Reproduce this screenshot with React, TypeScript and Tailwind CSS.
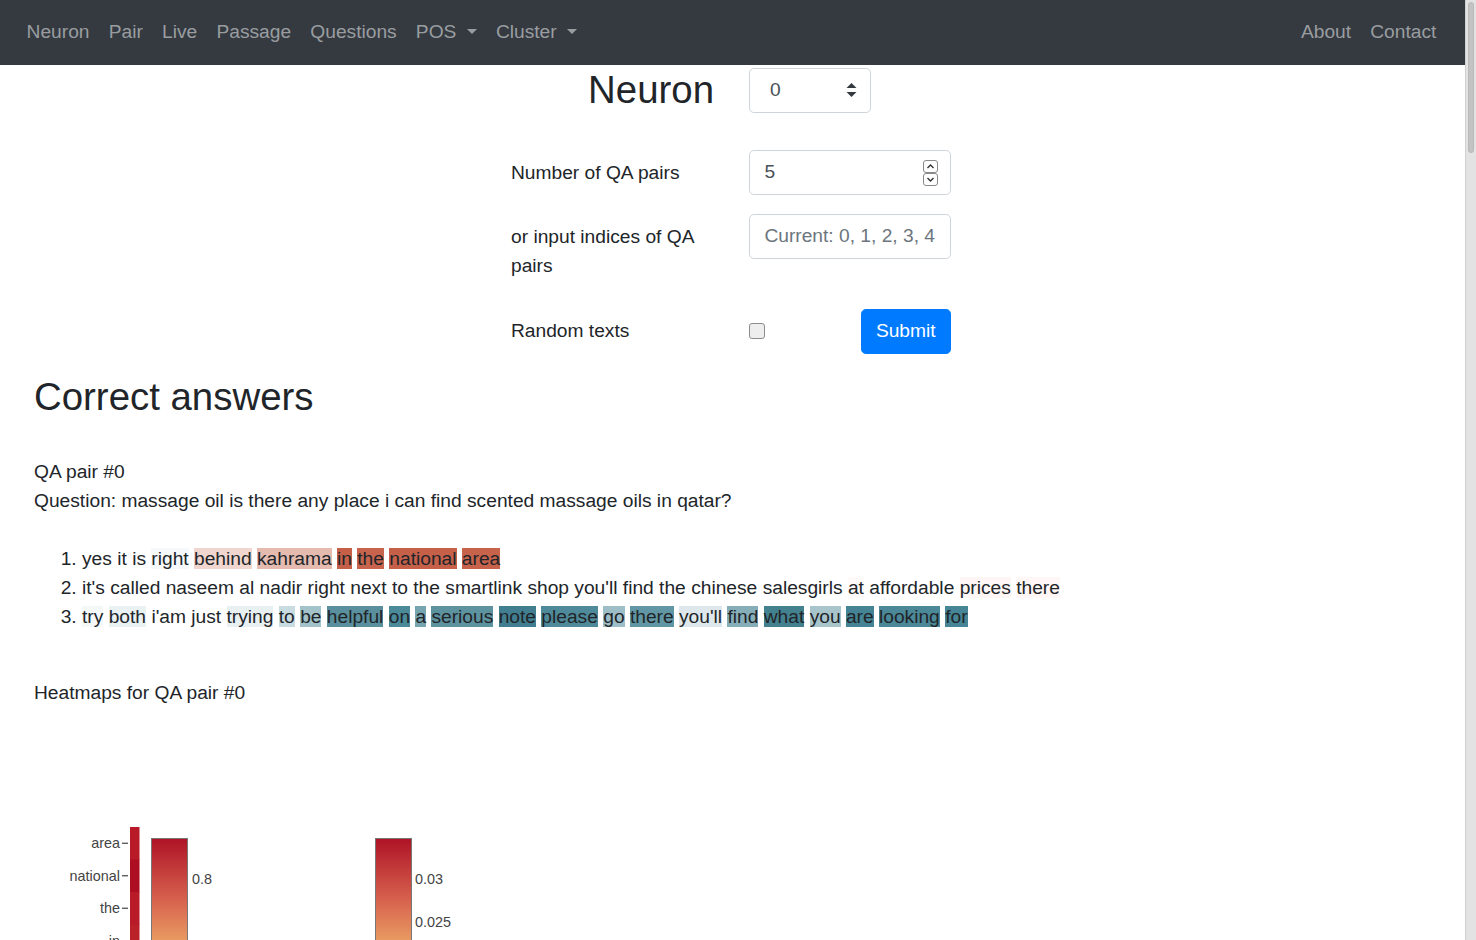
import React from "react";

type Tok = { w: string; c?: string };

const t = (w: string, c?: string): Tok => ({ w, c });

const answers: Tok[][] = [
  [
    t("yes"),
    t("it"),
    t("is"),
    t("right", "bg-[#f6f9fb]"),
    t("behind", "bg-[#f0d6cf]"),
    t("kahrama", "bg-[#e5bbb0]"),
    t("in", "bg-[#c55f48]"),
    t("the", "bg-[#c8644d]"),
    t("national", "bg-[#c66049]"),
    t("area", "bg-[#c7624b]"),
  ],
  "it's called naseem al nadir right next to the smartlink shop you'll find the chinese salesgirls"
    .split(" ")
    .map((w) => t(w))
    .concat([t("at", "bg-[#fefaf9]"), t("affordable"), t("prices", "bg-[#fdf6f5]"), t("there", "bg-[#fef7f6]")]),
  [
    t("try", "bg-[#f4f8f9]"),
    t("both", "bg-[#eaf1f3]"),
    t("i'am"),
    t("just"),
    t("trying", "bg-[#e9f0f2]"),
    t("to", "bg-[#c8dbe0]"),
    t("be", "bg-[#a3c2ca]"),
    t("helpful", "bg-[#5a909e]"),
    t("on", "bg-[#4a8a99]"),
    t("a", "bg-[#76a4af]"),
    t("serious", "bg-[#5d929f]"),
    t("note", "bg-[#417f90]"),
    t("please", "bg-[#4e8a99]"),
    t("go", "bg-[#9dbec6]"),
    t("there", "bg-[#6197a4]"),
    t("you'll", "bg-[#dee8ec]"),
    t("find", "bg-[#86aeb8]"),
    t("what", "bg-[#44818f]"),
    t("you", "bg-[#a8c5cc]"),
    t("are", "bg-[#458494]"),
    t("looking", "bg-[#4b8898]"),
    t("for", "bg-[#468596]"),
  ],
];

function Caret() {
  return (
    <span className="inline-block ml-[5px] align-[4px] border-t-[5.8px] border-x-[5.8px] border-b-0 border-solid border-t-current border-x-transparent" />
  );
}

function Navbar() {
  const left = ["Neuron", "Pair", "Live", "Passage", "Questions"];
  return (
    <nav className="h-[65px] bg-[#343a40] flex items-center justify-between pl-[17px] pr-[19px] text-[#9a9da0]">
      <div className="flex">
        {left.map((l) => (
          <a key={l} className="px-[9.6px]">
            {l}
          </a>
        ))}
        <a className="px-[9.6px]">
          POS <Caret />
        </a>
        <a className="px-[9.6px]">
          Cluster <Caret />
        </a>
      </div>
      <div className="flex">
        <a className="px-[9.6px]">About</a>
        <a className="px-[9.6px]">Contact</a>
      </div>
    </nav>
  );
}

function SelectArrows() {
  return (
    <svg width="11" height="14" viewBox="0 0 11 14" className="text-[#343a40]">
      <path d="M5.5 0 L10.5 5 L0.5 5 Z" fill="currentColor" />
      <path d="M5.5 14 L10.5 9 L0.5 9 Z" fill="currentColor" />
    </svg>
  );
}

function Spinner() {
  return (
    <svg width="15" height="26" viewBox="0 0 15 26">
      <rect x="0.5" y="0.5" width="14" height="12" rx="2.5" fill="#fff" stroke="#8a8a8a" />
      <rect x="0.5" y="13.5" width="14" height="12" rx="2.5" fill="#fff" stroke="#8a8a8a" />
      <path d="M4.5 8 L7.5 5 L10.5 8" fill="none" stroke="#333" strokeWidth="1.4" />
      <path d="M4.5 18 L7.5 21 L10.5 18" fill="none" stroke="#333" strokeWidth="1.4" />
    </svg>
  );
}

function Form() {
  return (
    <div className="flex justify-center pr-[4px]">
      <div className="w-[441px]">
        <div className="grid grid-cols-[204px_202px] gap-x-[35px] items-center mt-[2px] mb-[37px]">
          <h1 className="text-right text-[38.4px] leading-[46px] font-normal">Neuron</h1>
          <div className="w-[122px] h-[45px] border border-[#ced4da] rounded-[4.8px] flex items-center justify-between pl-[20px] pr-[13px] text-[#495057]">
            <span>0</span>
            <SelectArrows />
          </div>
        </div>

        <div className="grid grid-cols-[204px_202px] gap-x-[35px] mb-[19.2px]">
          <label className="pl-px pt-[9px] pb-[7px]">Number of QA pairs</label>
          <div className="h-[45px] border border-[#ced4da] rounded-[4.8px] flex items-center justify-between pl-[14.4px] pr-[12px] text-[#495057]">
            <span>5</span>
            <Spinner />
          </div>
        </div>

        <div className="grid grid-cols-[204px_202px] gap-x-[35px] mb-[19.2px] items-start">
          <label className="pl-px pt-[9px] pb-[8.6px]">or input indices of QA pairs</label>
          <div className="h-[45px] border border-[#ced4da] rounded-[4.8px] flex items-center pl-[14.4px] text-[#6c757d]">
            Current: 0, 1, 2, 3, 4
          </div>
        </div>

        <div className="grid grid-cols-[204px_202px] gap-x-[35px] items-center">
          <label className="pl-px pt-px">Random texts</label>
          <div className="flex items-center justify-between">
            <span className="w-[16px] h-[16px] rounded-[3px] border border-[#8c8c8c] bg-[#eeeeee]" />
            <button className="h-[45px] px-[14.4px] bg-[#007bff] text-white rounded-[4.8px] border border-[#007bff]">
              Submit
            </button>
          </div>
        </div>
      </div>
    </div>
  );
}

function Heatmap() {
  const rows = [
    ["area", "#b81a27"],
    ["national", "#ad0e21"],
    ["the", "#ba1b29"],
    ["in", "#bb2129"],
    ["kahrama", "#d25a47"],
    ["behind", "#e5866a"],
    ["right", "#f4a582"],
    ["is", "#f9c6ab"],
    ["it", "#fbd3bd"],
    ["yes", "#fddbc7"],
  ];
  const rowH = 32.5;
  const top = 119;
  const barTop = 130;
  const barH = 300;
  const ticks1 = [
    ["0.8", 171],
    ["0.6", 237],
    ["0.4", 303],
    ["0.2", 369],
  ];
  const ticks2 = [
    ["0.03", 171],
    ["0.025", 214],
    ["0.02", 257],
    ["0.015", 300],
    ["0.01", 343],
    ["0.005", 386],
  ];
  return (
    <svg width="480" height="480" viewBox="0 0 480 480" className="block">
      <defs>
        <linearGradient id="cb" x1="0" y1="0" x2="0" y2="1">
          <stop offset="0" stopColor="#ae1326" />
          <stop offset="0.2" stopColor="#d6604d" />
          <stop offset="0.34" stopColor="#e99a62" />
          <stop offset="0.5" stopColor="#f4a582" />
          <stop offset="0.75" stopColor="#fddbc7" />
          <stop offset="1" stopColor="#fbeee6" />
        </linearGradient>
      </defs>
      {rows.map(([label, color], i) => {
        const y = top + i * rowH;
        return (
          <g key={label}>
            <rect x="96" y={y} width="9.5" height={rowH + 0.5} fill={color} />
            <line x1="88" x2="94" y1={y + rowH / 2} y2={y + rowH / 2} stroke="#444" strokeWidth="1.2" />
            <text
              x="86"
              y={y + rowH / 2 + 5}
              textAnchor="end"
              fontSize="14.4"
              fill="#444"
              fontFamily="Liberation Sans, Arial, sans-serif"
            >
              {label}
            </text>
          </g>
        );
      })}
      <rect x="117.5" y={barTop + 0.5} width="36" height={barH} fill="url(#cb)" stroke="#777" strokeWidth="1" />
      {ticks1.map(([l, y]) => (
        <text key={l} x="158" y={Number(y) + 5} fontSize="14.4" fill="#444" fontFamily="Liberation Sans, Arial, sans-serif">
          {l}
        </text>
      ))}
      <rect x="341.5" y={barTop + 0.5} width="36" height={barH} fill="url(#cb)" stroke="#777" strokeWidth="1" />
      {ticks2.map(([l, y]) => (
        <text key={l} x="381" y={Number(y) + 5} fontSize="14.4" fill="#444" fontFamily="Liberation Sans, Arial, sans-serif">
          {l}
        </text>
      ))}
    </svg>
  );
}

function ScrollTrack() {
  return (
    <div className="fixed top-0 right-0 w-[11px] h-screen bg-[#e3e3e3] border-l border-[#d0d0d0] pt-[2px] pl-[2px] pr-[2px]">
      <div className="h-[151px] rounded-full bg-[#c3c3c3] border border-[#b9b9b9]" />
    </div>
  );
}

export default function App() {
  return (
    <div className="pr-[11px] font-['Liberation_Sans',Arial,sans-serif] text-[19.2px] leading-[28.8px] text-[#212529] bg-white">
      <div className="min-h-[5775px]">
        <Navbar />
        <Form />
        <div className="px-[34px]">
          <h2 className="mt-[20.2px] text-[38.4px] leading-[46px] font-normal">Correct answers</h2>
          <div className="mt-[38.6px]">QA pair #0</div>
          <div>Question: massage oil is there any place i can find scented massage oils in qatar?</div>
          <ol className="mt-[29px] pl-[48px] list-decimal">
            {answers.map((a, i) => (
              <li key={i}>
                {a.map((tok, j) => (
                  <React.Fragment key={j}>
                    {j > 0 && " "}
                    {tok.c ? <span className={tok.c}>{tok.w}</span> : tok.w}
                  </React.Fragment>
                ))}
              </li>
            ))}
          </ol>
          <div className="mt-[47.6px]">Heatmaps for QA pair #0</div>
          <Heatmap />
        </div>
      </div>
      <ScrollTrack />
    </div>
  );
}
